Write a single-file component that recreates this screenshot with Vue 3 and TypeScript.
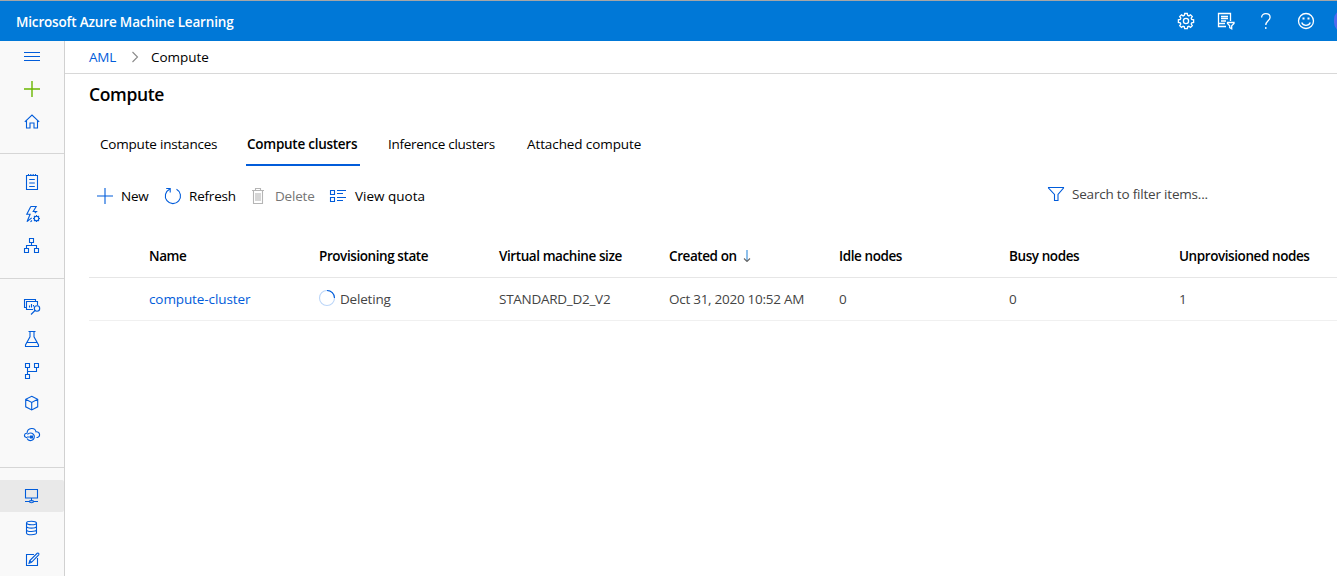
<script setup lang="ts">
interface Column {
  key: string
  label: string
  value: string
}

const navGroups: string[][] = [
  ['menu', 'add', 'home'],
  ['notebook', 'automl', 'designer'],
  ['datasets', 'experiments', 'pipelines', 'models', 'endpoints'],
  ['compute', 'datastores', 'labeling'],
]

const tabs: { key: string; label: string }[] = [
  { key: 'instances', label: 'Compute instances' },
  { key: 'clusters', label: 'Compute clusters' },
  { key: 'inference', label: 'Inference clusters' },
  { key: 'attached', label: 'Attached compute' },
]

const columns: Column[] = [
  { key: 'name', label: 'Name', value: 'compute-cluster' },
  { key: 'state', label: 'Provisioning state', value: 'Deleting' },
  { key: 'size', label: 'Virtual machine size', value: 'STANDARD_D2_V2' },
  { key: 'created', label: 'Created on', value: 'Oct 31, 2020 10:52 AM' },
  { key: 'idle', label: 'Idle nodes', value: '0' },
  { key: 'busy', label: 'Busy nodes', value: '0' },
  { key: 'unprovisioned', label: 'Unprovisioned nodes', value: '1' },
]
</script>

<template>
  <div class="shell">
    <header class="topbar">
      <span class="brand">Microsoft Azure Machine Learning</span>
      <div class="actions">
        <svg class="act" viewBox="0 0 20 20">
          <path d="M8.7 2.500h2.600l.4 1.900 1.200.5 1.600-1.100 1.800 1.800-1.100 1.600.5 1.200 1.900.4v2.600l-1.900.4-.5 1.200 1.100 1.600-1.800 1.800-1.600-1.100-1.200.5-.4 1.900H8.700l-.4-1.900-1.200-.5-1.600 1.100-1.800-1.800 1.100-1.600-.5-1.200-1.900-.4V8.800l1.900-.4.5-1.200-1.100-1.600 1.800-1.800 1.600 1.100 1.200-.5z" />
          <circle cx="10" cy="10" r="2.600" />
        </svg>
        <svg class="act" viewBox="0 0 20 20">
          <path d="M14.500 10V2.500h-12v13H10M2.500 12.500H9M5 5.500h7M5 7.500h7M5 10h5M11.500 11.500h6.500v1l-2.300 2.300v3l-2-1.200v-1.800l-2.200-2.300z" />
        </svg>
        <svg class="act" viewBox="0 0 20 20">
          <path d="M5.600 6.500C5.600 4 7.400 2.600 9.800 2.600s4.300 1.300 4.300 3.700c0 3.400-4.300 3.600-4.300 7.700" />
          <path d="M9.800 16v2" />
        </svg>
        <svg class="act" viewBox="0 0 20 20">
          <circle cx="10" cy="10" r="7.500" />
          <path d="M5.700 11.500c1.500 3.800 7.100 3.800 8.600 0" />
          <path class="solid" d="M6.500 6.500h2v2h-2zM11.500 6.500h2v2h-2z" />
        </svg>
        <span class="avatar"></span>
      </div>
    </header>

    <div class="body">
      <nav class="rail">
        <div v-for="(group, g) in navGroups" :key="g" class="group">
          <div v-for="item in group" :key="item" class="item" :class="item">
            <svg class="nav-icon" viewBox="0 0 20 20">
              <path v-if="item === 'menu'" d="M2 5.500h16M2 9.500h16M2 13.500h16" />
              <path v-else-if="item === 'add'" d="M2 10h16M10 2v16" />
              <path v-else-if="item === 'home'" d="M2.800 10.800L10 4l7.200 6.800M4.500 9.500v7.500h3.500v-5h4v5h3.500V9.500" />
              <template v-else-if="item === 'notebook'">
                <path d="M4.500 3.500h11v14h-11z" />
                <path d="M6.500 2v2M8.800 2v2M11.200 2v2M13.500 2v2M7.200 7.500h5.600M7.200 11h5.600M7.200 14.500h5.600" />
              </template>
              <template v-else-if="item === 'automl'">
                <path d="M10 16.500l-1.500 1.200M8.800 2.500h5.400l-3 5h3.300l-1.700 1.700M8.800 2.500L4.800 10.300h3.300L5 17.700l4.700-3.900" />
                <circle cx="14.500" cy="14.500" r="2.300" />
                <path d="M14.500 11v1.200M14.500 16.800V18M11 14.500h1.200M16.800 14.500H18M12 12l.9.900M16.100 16.100l.9.900M17 12l-.9.900M12.900 16.100l-.9.900" />
              </template>
              <path v-else-if="item === 'designer'" d="M7.500 2.500h4v4h-4zM2.500 12.500h4v4h-4zM12.500 12.500h4v4h-4zM9.500 6.500v3M4.500 12.500v-3h10v3" />
              <template v-else-if="item === 'datasets'">
                <path d="M4.500 10.500h-2v-8h11v2" />
                <path d="M11 12.500H4.500v-8h11v3.800M7.500 10.500V8.500M9.500 10.500V7M11.500 9.500V8" />
                <circle cx="15" cy="11.500" r="2.700" />
                <path d="M13 13.500L9 17.500" />
              </template>
              <path v-else-if="item === 'experiments'" d="M6.500 2.500h7M8 2.500v5.300L3.500 16v1.500h13V16L12 7.800V2.500M5.200 13.500h9.600" />
              <path v-else-if="item === 'pipelines'" d="M3.500 2.500h4v4h-4zM12.500 2.500h4v4h-4zM3.500 13.500h4v4h-4zM5.500 6.500v7M14.500 6.500v4h-9" />
              <path v-else-if="item === 'models'" d="M9.700 3.300l6 3v7.500l-6 3.200-6-3.200V6.300zM3.700 6.300l6 3.200 6-3.200M9.700 9.500V17" />
              <template v-else-if="item === 'endpoints'">
                <path d="M5 12.500H4.300C1.500 11.800 2 8.300 5 8.300c.3-6.200 8.300-6.200 8.900-1.500 4.300-.3 4.800 4.500 1.600 5.700h-1" />
                <path d="M5.500 9.500C8 6.500 12.500 8.500 12.300 12c-.3 4-5.700 4.800-7.300 1.500M5 12h3.500" />
                <path class="solid" d="M8 10.500h3v3H8z" />
              </template>
              <template v-else-if="item === 'compute'">
                <path d="M3.500 3.500h12v8.500h-12zM9.500 12v3M3 15.500h4M12 15.500h4" />
                <path d="M7 15.500c1-1.200 4-1.200 5 0-1 1.600-4 1.600-5 0z" />
              </template>
              <template v-else-if="item === 'datastores'">
                <ellipse cx="9.500" cy="5" rx="5" ry="1.800" />
                <path d="M4.500 5v10c0 2.400 10 2.400 10 0V5M4.500 8.300c0 2.400 10 2.400 10 0M4.500 11.700c0 2.400 10 2.400 10 0" />
              </template>
              <path v-else d="M12 4.500H4.500v11h11V8M7 13.300l.8-2.800 7.400-7.200c1.200-.8 2.200.5 1.500 1.500l-7.200 7.500zM7.800 10.500l1.700 1.800" />
            </svg>
          </div>
        </div>
      </nav>

      <main class="main">
        <div class="crumbs">
          <a class="crumb-link">AML</a>
          <svg class="chevron" viewBox="0 0 8 12"><path d="M1.500 1l5 5-5 5" /></svg>
          <span class="crumb-here">Compute</span>
        </div>

        <h1 class="title">Compute</h1>

        <div class="tabs">
          <div v-for="tab in tabs" :key="tab.key" class="tab" :class="tab.key">
            <span>{{ tab.label }}</span>
          </div>
        </div>

        <div class="toolbar">
          <div class="tool new">
            <svg viewBox="0 0 18 18"><path d="M1 9h16M9 1v16" /></svg>
            <span>New</span>
          </div>
          <div class="tool refresh">
            <svg viewBox="0 0 18 18"><path d="M12.500 2.300A7.600 7.600 0 1 1 5.500 2.200M2.200 1.500h4v4" /></svg>
            <span>Refresh</span>
          </div>
          <div class="tool delete">
            <svg viewBox="0 0 18 18"><path d="M2 3.500h12M5.500 3.500v-2h5v2M3.500 3.500v13h9v-13M6 6v8M8 6v8M10 6v8" /></svg>
            <span>Delete</span>
          </div>
          <div class="tool quota">
            <svg viewBox="0 0 18 18"><path d="M1.500 3.500h4v4h-4zM1.500 10.500h4v4h-4zM8 3.500h9M8 6.500h6M8 10.500h9M8 13.500h6" /></svg>
            <span>View quota</span>
          </div>
          <div class="tool search">
            <svg viewBox="0 0 18 18"><path d="M1.500 2.500h15v.5L11 9.500v6H7.500v-6L1.500 3z" /></svg>
            <span>Search to filter items...</span>
          </div>
        </div>

        <div class="table">
          <div class="row head">
            <div v-for="col in columns" :key="col.key" class="cell" :class="col.key">
              <span>{{ col.label }}</span>
              <svg v-if="col.key === 'created'" class="sort" viewBox="0 0 8 12">
                <path class="shaft" d="M4 0v11" />
                <path class="tip" d="M1 8.500l3 3 3-3" />
              </svg>
            </div>
          </div>
          <div class="row data">
            <div v-for="col in columns" :key="col.key" class="cell" :class="col.key">
              <svg v-if="col.key === 'state'" class="spinner" viewBox="0 0 18 18">
                <circle cx="9" cy="9" r="7.500" />
                <path d="M9 1.500A7.500 7.500 0 0 1 16.500 9" />
              </svg>
              <span>{{ col.value }}</span>
            </div>
          </div>
        </div>
      </main>
    </div>
  </div>
</template>

<style>
body {
  overflow: hidden;
  background: #fff;
}
</style>

<style scoped>
.shell {
  display: flex;
  flex-direction: column;
  width: 100%;
  height: 576px;
  overflow: hidden;
  font: 13.5px/20px "Segoe UI", "Open Sans", "Noto Sans", sans-serif;
  letter-spacing: -0.2px;
  color: #000;
  white-space: nowrap;
}
svg {
  display: block;
  flex: none;
  fill: none;
  stroke: #015cda;
  stroke-width: 1.1;
}
.topbar {
  display: flex;
  flex: none;
  justify-content: space-between;
  align-items: center;
  box-sizing: border-box;
  height: 41px;
  padding-left: 16px;
  border-top: 1px solid #a6a6a6;
  background: #0078d7;
}
.brand {
  color: #fff;
  font-weight: 600;
  letter-spacing: -0.17px;
  padding-top: 2px;
}
.actions {
  display: flex;
  align-items: center;
  gap: 20px;
}
.act {
  width: 20px;
  height: 20px;
  stroke: #fff;
  stroke-width: 1.3;
}
.act .solid {
  fill: #fff;
  stroke: none;
}
.avatar {
  width: 21px;
  height: 24px;
  margin-right: -18px;
  margin-left: -2px;
  border-radius: 12px;
  background: #4f6bed;
}
.body {
  display: flex;
  flex: 1;
  min-height: 0;
}
.rail {
  flex: none;
  width: 64px;
  border-right: 1px solid #d1d1d1;
  background: #f9f9f9;
}
.group + .group {
  margin-top: 16px;
  padding-top: 12px;
  border-top: 1px solid #d6d6d6;
}
.item {
  display: flex;
  align-items: center;
  justify-content: center;
  height: 32px;
}
.item.compute {
  border-radius: 0 2px 2px 0;
  background: #e9e9e9;
}
.nav-icon {
  width: 20px;
  height: 20px;
}
.nav-icon .solid {
  fill: #015cda;
  stroke: none;
}
.add .nav-icon {
  stroke: #6bb700;
  stroke-width: 1.4;
}
.main {
  flex: 1;
  min-width: 0;
}
.crumbs {
  display: flex;
  align-items: center;
  height: 32px;
  padding-left: 24px;
  border-bottom: 1px solid #d8d8d8;
}
.crumb-link {
  width: 28px;
  color: #015cda;
}
.crumb-here {
  letter-spacing: -0.05px;
}
.chevron {
  width: 8px;
  height: 12px;
  margin: 0 12px 0 14px;
  stroke: #8a8a8a;
}
.title {
  margin: 8px 0 0 24px;
  font-size: 17.5px;
  font-weight: 600;
  line-height: 24px;
  letter-spacing: -0.35px;
}
.tabs {
  display: flex;
  height: 42px;
  margin: 18px 0 0 35px;
}
.tab {
  box-sizing: border-box;
  height: 42px;
  padding-top: 10px;
}
.tab.instances {
  width: 146px;
}
.tab.clusters {
  width: 114px;
  padding-left: 1px;
  border-bottom: 2px solid #015cda;
  font-weight: 600;
  letter-spacing: -0.26px;
}
.tab.inference {
  width: 139px;
  margin-left: 28px;
  letter-spacing: -0.28px;
}
.tab.attached {
  letter-spacing: -0.1px;
}
.toolbar {
  display: flex;
  align-items: center;
  height: 40px;
  margin: 10px 0 0 31px;
}
.tool {
  display: flex;
  align-items: center;
  gap: 7px;
}
.tool svg {
  width: 18px;
  height: 18px;
}
.tool.new {
  width: 68px;
}
.tool.refresh {
  width: 86px;
}
.tool.delete {
  width: 79px;
  color: #757575;
}
.tool.delete svg {
  stroke: #b5b5b5;
}
.tool.quota {
  width: 100px;
  gap: 8px;
  letter-spacing: 0;
}
.tool.search {
  margin: -4px 0 0 618px;
  color: #444;
}
.table {
  margin: 20px 0 0 24px;
}
.row {
  display: grid;
  grid-template-columns: 170px 180px 170px 170px 170px 170px 170px;
  align-items: center;
  box-sizing: border-box;
  padding-left: 60px;
}
.row.head {
  height: 42px;
  padding-bottom: 1px;
  border-bottom: 1px solid #e6e6e6;
  font-weight: 600;
  letter-spacing: -0.42px;
}
.row.data {
  height: 43px;
  border-bottom: 1px solid #f0f0f0;
  color: #444;
}
.cell {
  display: flex;
  align-items: center;
}
.data .name {
  color: #015cda;
  letter-spacing: -0.1px;
}
.data .size,
.data .created {
  letter-spacing: -0.27px;
}
.spinner {
  width: 18px;
  height: 18px;
  margin: -2px 4px 0 -1px;
}
.spinner circle {
  stroke: #bcd6f8;
}
.sort {
  width: 8px;
  height: 12px;
  margin-left: 6px;
}
.sort .shaft {
  stroke: #71afe5;
  stroke-width: 1.6;
}
.sort .tip {
  stroke: #666;
}
</style>
